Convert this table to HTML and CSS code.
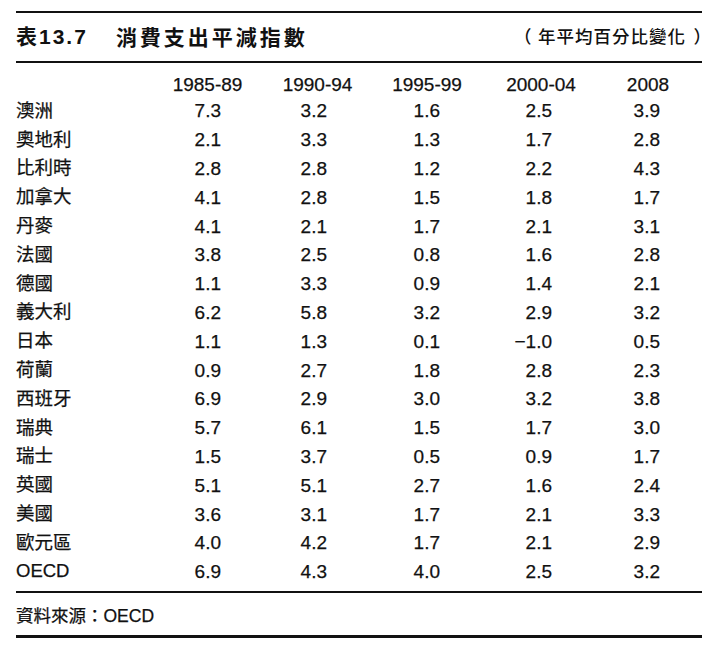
FILE: index.html
```html
<!DOCTYPE html>
<html lang="zh-Hant">
<head>
<meta charset="utf-8">
<title>表13.7 消費支出平減指數</title>
<link rel="stylesheet" href="styles.css">
</head>
<body>
<div class="sheet">
  <div class="rule rule-top"></div>
  <div class="title-row">
    <h1 class="title"><span class="title-num">表13.7</span><span class="title-text">消費支出平減指數</span></h1>
    <div class="unit"><span class="paren-l">（</span><span class="unit-text">年平均百分比變化</span><span class="paren-r">）</span></div>
  </div>
  <div class="rule rule-mid"></div>
  <table class="data">
    <colgroup>
      <col class="c-label"><col class="c1"><col class="c2"><col class="c3"><col class="c4"><col class="c5">
    </colgroup>
    <thead>
      <tr><th></th><th>1985-89</th><th>1990-94</th><th>1995-99</th><th>2000-04</th><th>2008</th></tr>
    </thead>
    <tbody>
      <tr><td>澳洲</td><td>7.3</td><td>3.2</td><td>1.6</td><td>2.5</td><td>3.9</td></tr>
      <tr><td>奧地利</td><td>2.1</td><td>3.3</td><td>1.3</td><td>1.7</td><td>2.8</td></tr>
      <tr><td>比利時</td><td>2.8</td><td>2.8</td><td>1.2</td><td>2.2</td><td>4.3</td></tr>
      <tr><td>加拿大</td><td>4.1</td><td>2.8</td><td>1.5</td><td>1.8</td><td>1.7</td></tr>
      <tr><td>丹麥</td><td>4.1</td><td>2.1</td><td>1.7</td><td>2.1</td><td>3.1</td></tr>
      <tr><td>法國</td><td>3.8</td><td>2.5</td><td>0.8</td><td>1.6</td><td>2.8</td></tr>
      <tr><td>德國</td><td>1.1</td><td>3.3</td><td>0.9</td><td>1.4</td><td>2.1</td></tr>
      <tr><td>義大利</td><td>6.2</td><td>5.8</td><td>3.2</td><td>2.9</td><td>3.2</td></tr>
      <tr><td>日本</td><td>1.1</td><td>1.3</td><td>0.1</td><td>−1.0</td><td>0.5</td></tr>
      <tr><td>荷蘭</td><td>0.9</td><td>2.7</td><td>1.8</td><td>2.8</td><td>2.3</td></tr>
      <tr><td>西班牙</td><td>6.9</td><td>2.9</td><td>3.0</td><td>3.2</td><td>3.8</td></tr>
      <tr><td>瑞典</td><td>5.7</td><td>6.1</td><td>1.5</td><td>1.7</td><td>3.0</td></tr>
      <tr><td>瑞士</td><td>1.5</td><td>3.7</td><td>0.5</td><td>0.9</td><td>1.7</td></tr>
      <tr><td>英國</td><td>5.1</td><td>5.1</td><td>2.7</td><td>1.6</td><td>2.4</td></tr>
      <tr><td>美國</td><td>3.6</td><td>3.1</td><td>1.7</td><td>2.1</td><td>3.3</td></tr>
      <tr><td>歐元區</td><td>4.0</td><td>4.2</td><td>1.7</td><td>2.1</td><td>2.9</td></tr>
      <tr><td>OECD</td><td>6.9</td><td>4.3</td><td>4.0</td><td>2.5</td><td>3.2</td></tr>
    </tbody>
  </table>
  <div class="rule rule-bottom"></div>
  <div class="source">資料來源：OECD</div>
  <div class="rule rule-end"></div>
</div>
</body>
</html>
```

FILE: styles.css
```css
html, body {
  margin: 0;
  padding: 0;
  background: #ffffff;
}

body {
  color: #111111;
  font-family: "Liberation Sans", "Noto Sans CJK TC", sans-serif;
  -webkit-text-stroke: 0.25px #111111;
}

.sheet {
  width: 686px;
  margin-left: 16px;
  padding-top: 11px;
}

.rule {
  background: #111111;
}

.rule-top { height: 2px; }
.rule-mid { height: 2px; }
.rule-bottom { height: 2px; margin-top: 5px; }
.rule-end { height: 3px; }

.title-row {
  height: 48px;
  display: flex;
  align-items: center;
  justify-content: space-between;
}

.title {
  margin: 0;
  font-size: 21px;
  font-weight: bold;
  line-height: 1;
  display: flex;
  align-items: center;
  margin-top: -2px;
  -webkit-text-stroke: 0;
}

.title-num {
  letter-spacing: 2px;
}

.title-text {
  margin-left: 28px;
  letter-spacing: 3px;
  font-family: "Noto Sans CJK TC", sans-serif;
}

.unit {
  display: flex;
  align-items: center;
  font-family: "Noto Sans CJK TC", sans-serif;
  font-size: 17.5px;
  font-weight: 500;
  line-height: 1;
  margin-top: -2px;
  margin-right: -9px;
  -webkit-text-stroke: 0;
}

.paren-l {
  margin-right: 6.5px;
}

.unit-text {
  letter-spacing: 1px;
}

.paren-r {
  margin-left: 7.5px;
}

.data {
  border-collapse: collapse;
  table-layout: fixed;
  width: 680px;
  font-size: 19px;
}

.c-label { width: 136px; }
.c1 { width: 111px; }
.c2 { width: 109px; }
.c3 { width: 110px; }
.c4 { width: 118px; }
.c5 { width: 96px; }

.data th {
  font-weight: normal;
  text-align: center;
  padding: 9px 0 0;
  height: 24.6px;
  line-height: 1;
  vertical-align: middle;
}

.data td {
  padding: 0;
  height: 28.8px;
  line-height: 1;
  text-align: right;
  vertical-align: middle;
}

.data td:first-child {
  text-align: left;
  font-size: 18.5px;
  font-weight: normal;
}

.data td:nth-child(2) { padding-right: 42px; }
.data td:nth-child(3) { padding-right: 45px; }
.data td:nth-child(4) { padding-right: 42px; }
.data td:nth-child(5) { padding-right: 48px; }
.data td:nth-child(6) { padding-right: 36px; }

.source {
  height: 42px;
  display: flex;
  align-items: center;
  font-size: 17.5px;
  font-weight: normal;
}
```
